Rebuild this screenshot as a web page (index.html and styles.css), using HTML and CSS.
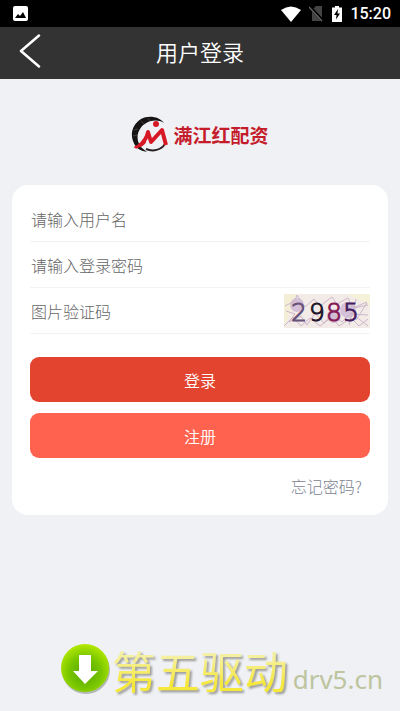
FILE: index.html
```html
<!DOCTYPE html>
<html lang="zh-CN">
<head>
  <meta charset="UTF-8">
  <meta name="viewport" content="width=device-width, initial-scale=1.0">
  <title>用户登录</title>
  <link rel="stylesheet" href="styles.css">
</head>
<body>
  <div class="status-bar">
    <svg class="status-photo" width="15" height="15" viewBox="0 0 15 15">
      <rect width="15" height="15" rx="2" fill="#fff"/>
      <path d="M2 12l3-4 2 2 3-4 3 6z" fill="#000"/>
    </svg>
    <div class="status-icons">
      <svg width="20" height="16" viewBox="0 0 20 16">
        <path d="M0 4Q10-3 20 4L10 16z" fill="#fff"/>
      </svg>
      <svg width="15" height="16" viewBox="0 0 15 16">
        <path d="M13 0v15H3V4l4-4z" fill="#444"/>
        <path d="M1 1l13 14" stroke="#000" stroke-width="3"/>
        <path d="M0 1l13 14" stroke="#666" stroke-width="1.3"/>
      </svg>
      <svg width="10" height="16" viewBox="0 0 10 16">
        <path d="M3 0h4v1.500h3V16H0V1.500h3z" fill="#fff"/>
        <path d="M6 3L2 9h2.500L4 13.500 8 7.500H5.500z" fill="#000"/>
      </svg>
      <span class="time">15:20</span>
    </div>
  </div>

  <header class="header">
    <button class="back" type="button" aria-label="返回" onclick="history.back()">
      <svg width="22" height="34" viewBox="0 0 22 34">
        <path d="M20 1.500L2 17l18 15.500" fill="none" stroke="#fff" stroke-width="2.500" stroke-linecap="round" stroke-linejoin="round"/>
      </svg>
    </button>
    <h1>用户登录</h1>
  </header>

  <main>
    <div class="logo">
      <svg width="38" height="38" viewBox="0 0 38 38">
        <path d="M33 7C28 0 17-1 10 3 2 8-1 17 2 25c2 6 6 9 10 10l4 1-5-4C6 27 5 19 9 13c5-8 16-11 24-6z" fill="#181415"/>
        <path d="M3 14l4-1M2 20l4-1M10 5l3 3M17 2l2 3" stroke="#555" stroke-width="0.700"/>
        <path d="M34 28c-4 6-12 8-19 5" fill="none" stroke="#2a2022" stroke-width="2"/>
        <circle cx="25" cy="8" r="3" fill="#d71926"/>
        <path d="M8 30c5-4 8-8 9-14l3 10 11-12 4 15" fill="none" stroke="#d71926" stroke-width="4" stroke-linejoin="round"/>
        <path d="M4 32c2-3 7-1 10-7" fill="none" stroke="#d71926" stroke-width="3"/>
      </svg>
      <span>满江红配资</span>
    </div>

    <form class="card" onsubmit="return false">
      <div class="field">
        <input type="text" name="username" placeholder="请输入用户名" aria-label="用户名">
      </div>
      <div class="field">
        <input type="password" name="password" placeholder="请输入登录密码" aria-label="登录密码">
      </div>
      <div class="field">
        <input type="text" name="captcha" placeholder="图片验证码" aria-label="图片验证码">
        <svg class="captcha" width="86" height="34" viewBox="0 0 86 34">
          <rect width="86" height="34" fill="#f3ebe8"/>
          <path d="M0 0h12l-4 14-8 20z" fill="#f3eed5"/>
          <path d="M64 0h22v12z" fill="#f6f2d9"/>
          <g fill="#c7afd0" opacity="0.700">
            <circle cx="13" cy="11" r="7"/>
            <circle cx="50" cy="22" r="7"/>
            <circle cx="64" cy="16" r="8"/>
          </g>
          <g fill="none" stroke="#cdb6ca" stroke-width="1">
            <path d="M1 12l10-5 2-6 8 12 9-8 6 7 12-9 5 7 11-6 5 10 14-6"/>
            <path d="M2 17l9 3-6 8 12-6 6 9 8-12 9 10 8-9 10 8 9-9 17 13"/>
            <path d="M0 32l9-9 8 9 9-8 10 8 12-9 7 9 12-8 8 8 9-7"/>
            <path d="M72 5l-7 26M83 9l-11 17M70 14l14-3M66 20l18 1"/>
          </g>
          <g class="captcha-text">
            <text x="7" y="27" fill="#685279" stroke="#685279">2</text>
            <text x="25" y="27" fill="#211629" stroke="#211629">9</text>
            <text x="42" y="27" fill="#851b57" stroke="#851b57">8</text>
            <text x="59" y="27" fill="#431d60" stroke="#431d60">5</text>
          </g>
        </svg>
      </div>
      <button class="btn login" type="submit">登录</button>
      <button class="btn register" type="button">注册</button>
      <a class="forgot" href="#">忘记密码?</a>
    </form>
  </main>

  <footer class="watermark">
    <svg width="52" height="54" viewBox="0 0 52 54">
      <defs>
        <radialGradient id="green" cx="50%" cy="60%" r="60%">
          <stop offset="0" stop-color="#55a800"/>
          <stop offset="0.550" stop-color="#78c500"/>
          <stop offset="1" stop-color="#b3e900"/>
        </radialGradient>
      </defs>
      <circle cx="26" cy="27" r="24" fill="#b4b7b5"/>
      <circle cx="25" cy="25" r="24" fill="url(#green)"/>
      <path d="M19 12h12v16h7L25 41 13 28h6z" fill="#fff"/>
    </svg>
    <span class="site-name">第五驱动</span>
    <span class="site-url">drv5.cn</span>
  </footer>
</body>
</html>
```
FILE: styles.css
```css
* {
  box-sizing: border-box;
}
body {
  margin: 0;
  min-height: 100vh;
  display: flex;
  flex-direction: column;
  background-color: #eff1f5;
  font-family: "Noto Sans CJK SC", sans-serif;
  font-weight: 300;
}
svg {
  display: block;
  flex-shrink: 0;
}
.status-bar {
  height: 27px;
  padding: 0 9px 0 13px;
  display: flex;
  align-items: center;
  justify-content: space-between;
  background-color: #000;
}
.status-icons {
  display: flex;
  align-items: center;
  gap: 8px;
}
.time {
  color: #fff;
  font-family: Roboto, sans-serif;
  font-size: 16px;
  font-weight: 500;
  line-height: 26px;
}
.header {
  height: 52px;
  padding: 0 19px 4px;
  display: grid;
  grid-template-columns: 22px 1fr 22px;
  align-items: center;
  background-color: #333;
}
.back {
  padding: 0;
  border: none;
  background: none;
  cursor: pointer;
}
.header h1 {
  margin: 0;
  color: #fff;
  font-size: 22px;
  font-weight: 350;
  line-height: 46px;
  text-align: center;
}
main {
  padding: 37px 12px 20px;
}
.logo {
  display: flex;
  align-items: center;
  justify-content: center;
  gap: 4px;
  margin-bottom: 31px;
}
.logo span {
  color: #c51c2b;
  font-size: 19px;
  font-weight: 700;
  line-height: 38px;
}
.card {
  padding: 11px 18px 12px;
  display: flex;
  flex-direction: column;
  background-color: #fff;
  border-radius: 16px;
}
.field {
  height: 46px;
  display: flex;
  align-items: center;
  border-bottom: 1px solid #f3f3f4;
}
.field input {
  flex: 1;
  min-width: 0;
  height: 44px;
  padding: 0 1px;
  border: none;
  outline: none;
  background: none;
  color: #333;
  font-family: inherit;
  font-size: 16px;
  font-weight: 300;
}
.field input::placeholder {
  color: #666;
  opacity: 1;
}
.captcha-text {
  font-family: "DejaVu Sans", sans-serif;
  font-size: 25px;
  stroke-width: 1;
}
.btn {
  height: 45px;
  border: none;
  border-radius: 9px;
  color: #fff;
  font-family: inherit;
  font-size: 16px;
  font-weight: 350;
  cursor: pointer;
}
.login {
  margin-top: 23px;
  background-color: #e34430;
}
.register {
  margin-top: 11px;
  background-color: #ff634f;
}
.forgot {
  align-self: flex-end;
  margin-top: 12px;
  padding: 0 8px 0 0;
  color: #7c8290;
  font-size: 16px;
  line-height: 33px;
  text-decoration: none;
}
.watermark {
  margin-top: auto;
  padding: 0 17px 14px;
  display: flex;
  align-items: center;
  justify-content: flex-end;
}
.site-name {
  background: linear-gradient(#f5f0a0 25%, #f6e83b 75%);
  background-clip: text;
  -webkit-background-clip: text;
  color: transparent;
  filter: drop-shadow(2px 2px 1px #9a9a94);
  font-size: 44px;
  font-weight: 400;
  line-height: 54px;
}
.site-url {
  margin-left: 5px;
  padding-top: 18px;
  color: #bdc49e;
  font-family: "Noto Sans", sans-serif;
  font-size: 26px;
  font-weight: 400;
  line-height: 36px;
}
```
